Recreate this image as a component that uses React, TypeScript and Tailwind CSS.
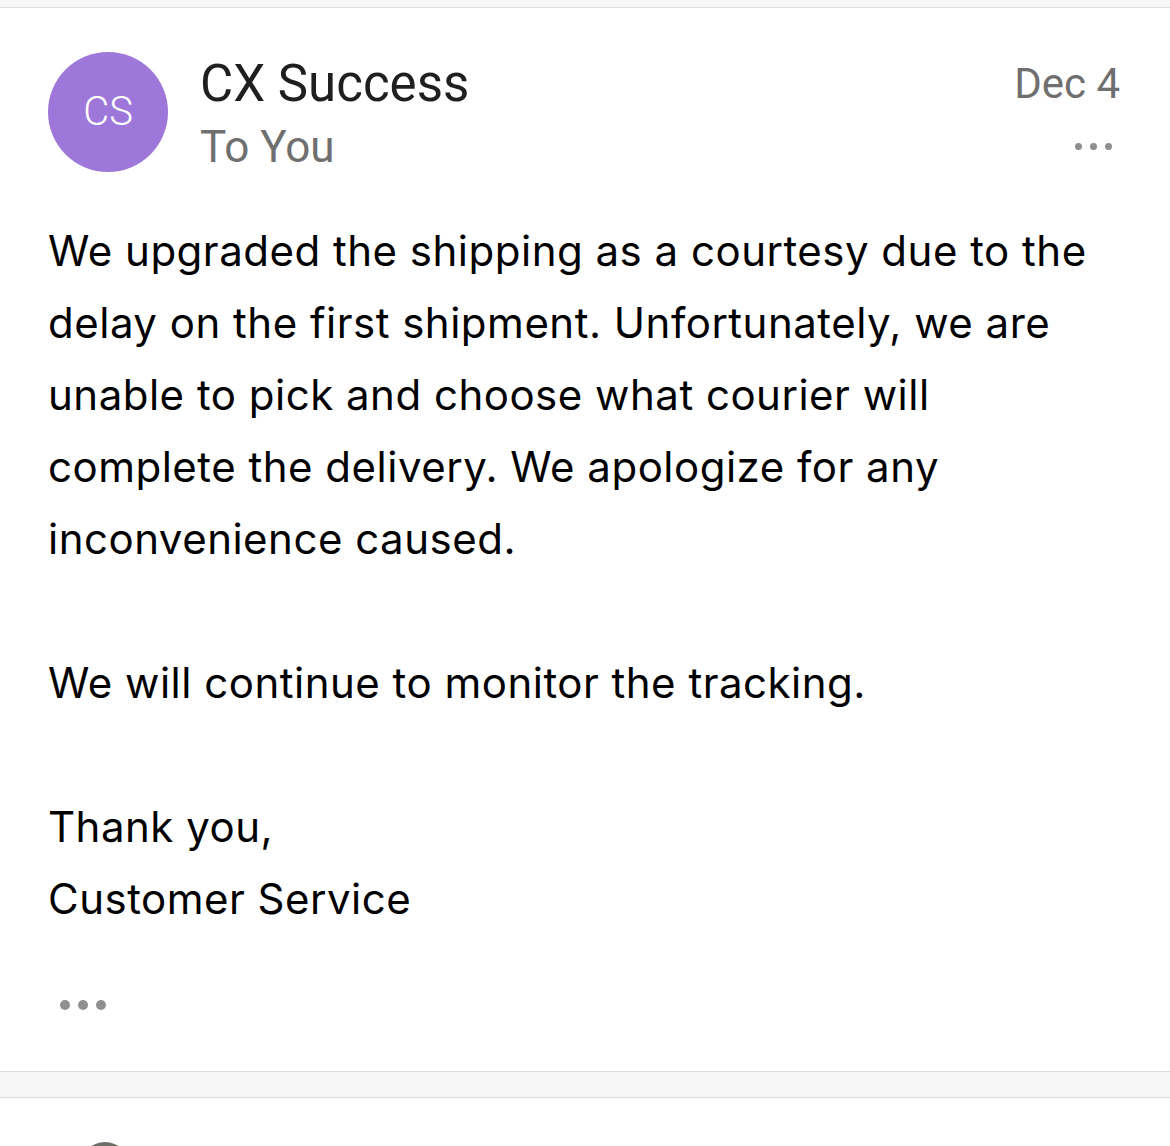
import React from 'react';

const Dots = ({ size, gap, color }: { size: number; gap: number; color: string }) => (
  <div className="flex items-center" style={{ gap }}>
    {[0, 1, 2].map((i) => (
      <span key={i} className="block rounded-full" style={{ width: size, height: size, background: color }} />
    ))}
  </div>
);

export default function App() {
  return (
    <div className="w-[1170px] h-[1146px] overflow-hidden bg-white">
      <div className="h-[8px] bg-[#f7f7f7] border-b border-[#e0e0e0]" />

      <div className="px-[48px] pt-[44px]">
        {/* Header */}
        <div className="flex items-start" style={{ fontFamily: 'Roboto, sans-serif' }}>
          <div className="w-[120px] h-[120px] rounded-full bg-[#9e77db] flex items-center justify-center text-white text-[40px] font-light leading-none shrink-0">
            CS
          </div>
          <div className="ml-[32px] flex-1 pt-[2px]">
            <div className="text-[51px] leading-[60px] text-[#1f1f1f]">CX Success</div>
            <div className="text-[44px] leading-[56px] mt-[5px] text-[#6f6f6f]">To You</div>
          </div>
          <div className="flex flex-col items-end pt-[8px] pr-[2px]">
            <div className="text-[42px] leading-[48px] text-[#6f6f6f]">Dec 4</div>
            <div className="mt-[35px] mr-[8px]">
              <Dots size={7} gap={8} color="#8e8e8e" />
            </div>
          </div>
        </div>

        {/* Body */}
        <div
          className="mt-[40px] text-[42px] leading-[72px] tracking-[0.5px] text-black"
          style={{ fontFamily: 'Inter, sans-serif', fontVariantLigatures: 'none' }}
        >
          <p>
            We upgraded the shipping as a courtesy due to the
            <br />
            delay on the first shipment. Unfortunately, we are
            <br />
            unable to pick and choose what courier will
            <br />
            complete the delivery. We apologize for any
            <br />
            inconvenience caused.
          </p>
          <p className="mt-[72px]">We will continue to monitor the tracking.</p>
          <p className="mt-[72px]">
            Thank you,
            <br />
            Customer Service
          </p>
        </div>

        <div className="mt-[65px] ml-[12px]">
          <Dots size={10} gap={8} color="#909090" />
        </div>
      </div>

      <div className="mt-[61px] h-[27px] bg-[#f7f7f7] border-y border-[#dcdcdc]" />
      <div className="px-[80px] pt-[44px]">
        <div className="w-[50px] h-[50px] rounded-full bg-[#6b6f66]" />
      </div>
    </div>
  );
}
